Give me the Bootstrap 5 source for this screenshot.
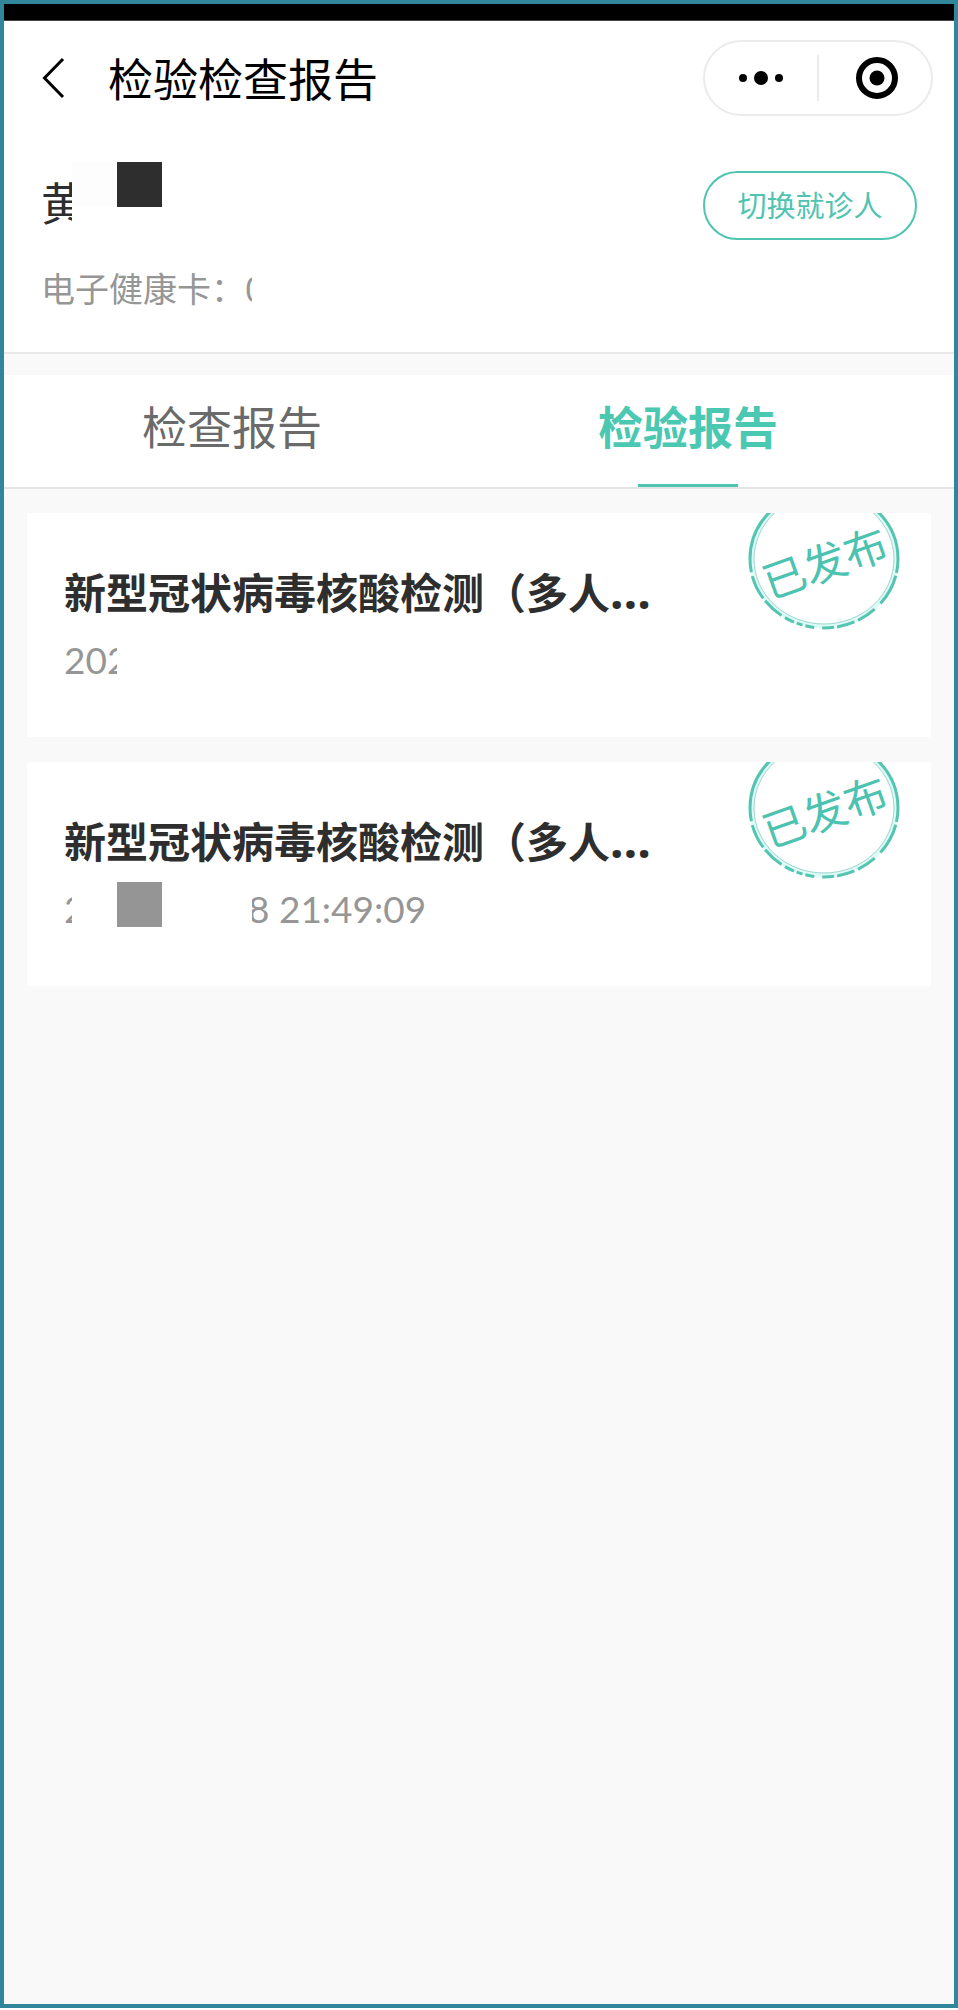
<!DOCTYPE html>
<html lang="zh-CN">
<head>
<meta charset="utf-8">
<meta name="viewport" content="width=device-width, initial-scale=1">
<title>检验检查报告</title>
<link href="https://cdn.jsdelivr.net/npm/bootstrap@5.3.0/dist/css/bootstrap.min.css" rel="stylesheet">
<style>
:root { --teal: #4fc4b0; --line: #e8e8e8; --muted: #969696; --frame: #31869b; }
body { font-family: "Noto Sans CJK SC", sans-serif; background: #fff; }
.screen { border: 4px solid var(--frame); background: #f9f9f9; min-height: calc(100vh - 2px); }
.status-strip { height: 17px; background: #000; border-bottom: 1px solid #444; }
.topbar { padding: 19px 21px 0 36px; }
.page-title { font-size: 45px; line-height: 60px; color: #000; }
.back-link { width: 32px; height: 44px; margin-right: 36px; }
.capsule { width: 230px; height: 76px; border: 2px solid #ebebeb; }
.capsule .more-btn { width: 112px; }
.capsule .split { width: 2px; height: 46px; background: #ebebeb; }
.patient { padding: 46px 37px 40px 37px; border-bottom: 2px solid var(--line); }
.patient-name { font-size: 45px; line-height: 60px; color: #2e2e2e; width: 31px; margin-top: 10px; }
.mask { width: 45px; height: 45px; }
.mask-faint { background: #fdfdfd; }
.mask-dark { background: #2e2e2e; }
.mask-grey { background: #959595; }
.switch-btn { width: 214px; height: 69px; margin-top: 9px; padding: 0 0 3px; font-size: 29px; line-height: 40px; border: 2px solid var(--teal); color: var(--teal); background: #fff; }
.health-card { font-size: 34px; line-height: 48px; color: var(--muted); width: 211px; margin-top: 24px; white-space: nowrap; }
.report-tabs { margin-top: 21px; padding-right: 38px; border-bottom: 2px solid #e4e4e4; }
.report-tabs .nav-link { position: relative; padding: 21px 0 31px; font-size: 45px; line-height: 60px; color: #6a6a6a; }
.report-tabs .nav-link.active { color: #4bc8b2; font-weight: 700; }
.report-tabs .nav-link.active::after { content: ""; position: absolute; left: 50%; bottom: 0; width: 100px; height: 3px; margin-left: -50px; background: var(--teal); }
.report-list { padding: 24px 23px; gap: 25px; }
.report-card { border: 0; border-radius: 2px; height: 224px; padding: 48px 37px; overflow: hidden; }
.report-name { font-size: 42px; line-height: 60px; font-weight: 700; color: #2e2e2e; }
.report-name .dots { font-family: "Noto Sans", sans-serif; font-size: 48px; line-height: 1; }
.report-time { font-family: Lato, sans-serif; font-size: 37px; line-height: 53px; color: var(--muted); margin-top: 12px; white-space: pre; }
.year-part { width: 53px; }
.year-first { width: 8px; }
.time-part span { margin-left: -4px; }
.stamp { position: absolute; top: 0; right: 27px; width: 160px; height: 120px; }
</style>
</head>
<body>
<div class="screen d-flex flex-column">
  <div class="status-strip"></div>
  <header class="bg-white">
    <div class="topbar d-flex align-items-center">
      <a href="#" class="back-link d-block flex-shrink-0" aria-label="返回">
        <svg class="d-block" width="32" height="44" viewBox="0 0 32 44" fill="none" stroke="#000" stroke-width="3"><path d="M23 3 4.500 22 23 41"/></svg>
      </a>
      <h1 class="page-title fw-normal mb-0 me-auto">检验检查报告</h1>
      <div class="capsule rounded-pill d-flex align-items-center">
        <button type="button" class="more-btn btn border-0 p-0" aria-label="更多">
          <svg class="d-block mx-auto" width="48" height="44" viewBox="0 0 48 44"><circle cx="6" cy="22" r="4"/><circle cx="24" cy="22" r="7"/><circle cx="42" cy="22" r="4"/></svg>
        </button>
        <span class="split"></span>
        <button type="button" class="btn border-0 p-0 ps-1 flex-fill" aria-label="关闭">
          <svg class="d-block mx-auto" width="44" height="44" viewBox="0 0 44 44"><circle cx="22" cy="22" r="18" fill="none" stroke="#000" stroke-width="6"/><circle cx="22" cy="22" r="7.500"/></svg>
        </button>
      </div>
    </div>
    <section class="patient">
      <div class="d-flex align-items-start">
        <div class="patient-name overflow-hidden text-nowrap">黄</div>
        <span class="mask mask-faint"></span>
        <span class="mask mask-dark"></span>
        <button type="button" class="switch-btn btn rounded-pill ms-auto">切换就诊人</button>
      </div>
      <div class="health-card overflow-hidden">电子健康卡：0</div>
    </section>
  </header>

  <nav class="report-tabs nav nav-fill bg-white" aria-label="报告类型">
    <a class="nav-link nav-item col" href="#">检查报告</a>
    <a class="nav-link nav-item col active" href="#" aria-current="page">检验报告</a>
  </nav>

  <main class="report-list d-flex flex-column">
    <article class="report-card card">
      <h2 class="report-name text-nowrap mb-0">新型冠状病毒核酸检测（多人<span class="dots">…</span></h2>
      <div class="report-time d-flex"><span class="year-part overflow-hidden">2022</span></div>
      <svg class="stamp" viewBox="0 0 160 120" role="img" aria-label="已发布">
        <g fill="none">
          <ellipse cx="80" cy="46" rx="72" ry="67" stroke="#dcfbf6" stroke-width="5"/>
          <ellipse cx="80" cy="46" rx="70" ry="65" stroke="#a3d6ce" stroke-width="1"/>
          <ellipse cx="80" cy="46" rx="74" ry="69" stroke="#55c4b0" stroke-width="3" stroke-dasharray="14 3 32 8 20 4 18 3 12 8 9 3 6 3 10 4 22 3 25 4 300"/>
        </g>
        <text transform="translate(81 50) rotate(-19.500)" text-anchor="middle" y="16" font-size="43" fill="#4cc3b0">已发布</text>
      </svg>
    </article>
    <article class="report-card card">
      <h2 class="report-name text-nowrap mb-0">新型冠状病毒核酸检测（多人<span class="dots">…</span></h2>
      <div class="report-time d-flex">
        <span class="year-first overflow-hidden">2</span>
        <span class="mask"></span>
        <span class="mask mask-grey"></span>
        <span class="mask"></span>
        <span class="mask"></span>
        <span class="time-part overflow-hidden"><span>8 21:49:09</span></span>
      </div>
      <svg class="stamp" viewBox="0 0 160 120" role="img" aria-label="已发布">
        <g fill="none">
          <ellipse cx="80" cy="46" rx="72" ry="67" stroke="#dcfbf6" stroke-width="5"/>
          <ellipse cx="80" cy="46" rx="70" ry="65" stroke="#a3d6ce" stroke-width="1"/>
          <ellipse cx="80" cy="46" rx="74" ry="69" stroke="#55c4b0" stroke-width="3" stroke-dasharray="14 3 32 8 20 4 18 3 12 8 9 3 6 3 10 4 22 3 25 4 300"/>
        </g>
        <text transform="translate(81 50) rotate(-19.500)" text-anchor="middle" y="16" font-size="43" fill="#4cc3b0">已发布</text>
      </svg>
    </article>
  </main>
</div>
<script src="https://cdn.jsdelivr.net/npm/bootstrap@5.3.0/dist/js/bootstrap.bundle.min.js"></script>
</body>
</html>
